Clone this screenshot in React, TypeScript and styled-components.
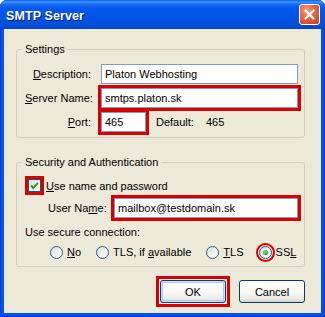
import React from "react";
import styled, { createGlobalStyle } from "styled-components";

const GlobalStyle = createGlobalStyle`
  body {
    margin: 0;
    background: #ffffff;
  }
`;

const Window = styled.div`
  width: 325px;
  height: 317px;
  box-sizing: border-box;
  display: flex;
  flex-direction: column;
  border-radius: 7px 7px 0 0;
  overflow: hidden;
  background: #0054e3;
  box-shadow: inset 1px 0 0 #0831d9, inset -1px 0 0 #0831d9, inset 0 -1px 0 #0831d9;
  font-family: "Liberation Sans", Arial, sans-serif;
  font-size: 11px;
  color: #000;
`;

const TitleBar = styled.div`
  height: 29px;
  flex: none;
  display: flex;
  align-items: center;
  justify-content: space-between;
  padding: 2px 5px 0 6px;
  box-sizing: border-box;
  background: linear-gradient(
    to bottom,
    #0a5fe6 0%,
    #3d95ff 7%,
    #1a6cf5 14%,
    #0058ee 30%,
    #0055e5 60%,
    #004fda 85%,
    #0046c6 100%
  );
`;

const Title = styled.span`
  color: #fff;
  font-weight: bold;
  font-size: 12.5px;
  text-shadow: 1px 1px 0 #0a1883;
  letter-spacing: 0.1px;
`;

const CloseButton = styled.div`
  width: 21px;
  height: 21px;
  margin-top: -2px;
  box-sizing: border-box;
  border: 1px solid #fff;
  border-radius: 3px;
  background: radial-gradient(circle at 35% 30%, #f2a07f 0%, #e46a43 40%, #c43c16 100%);
  display: flex;
  align-items: center;
  justify-content: center;
`;

const Body = styled.div`
  flex: 1;
  margin: 0 4px 4px;
  background: #ece9d8;
  padding: 13px 16px 0 12px;
  display: flex;
  flex-direction: column;
`;

const Group = styled.fieldset<{ $top?: number }>`
  margin: ${(p) => p.$top ?? 0}px 0 0;
  padding: 0;
  border: 1px solid #d0d0bf;
  border-radius: 3px;
  min-width: 0;
`;

const Legend = styled.legend`
  margin-left: 5px;
  padding: 0 3px;
  line-height: 14px;
`;

const FieldGrid = styled.div`
  display: grid;
  grid-template-columns: 66px 1fr;
  column-gap: 10px;
  row-gap: 4px;
  align-items: center;
  padding: 8px 6px 5px 8px;
`;

const Label = styled.label<{ $width?: number }>`
  text-align: ${(p) => (p.$width ? "left" : "right")};
  width: ${(p) => (p.$width ? `${p.$width}px` : "auto")};
  flex: none;
  white-space: nowrap;
`;

const TextBox = styled.input<{ $marked?: boolean; $width?: number }>`
  height: 20px;
  box-sizing: border-box;
  border: 1px solid #7f9db9;
  background: #fff;
  padding: 0 3px;
  margin: 0;
  font: inherit;
  color: #000;
  width: ${(p) => (p.$width ? `${p.$width}px` : "100%")};
  min-width: 0;
  outline: ${(p) => (p.$marked ? "3px solid #d60000" : "none")};
`;

const PortRow = styled.div`
  display: flex;
  align-items: center;
`;

const DefaultText = styled.span<{ $gap: number }>`
  margin-left: ${(p) => p.$gap}px;
`;

const SecurityContent = styled.div`
  padding: 8px 6px 6px 8px;
  display: flex;
  flex-direction: column;
`;

const CheckRow = styled.label`
  height: 17px;
  display: flex;
  align-items: center;
  gap: 5px;
  padding-left: 3px;
`;

const CheckBox = styled.span<{ $marked?: boolean }>`
  width: 13px;
  height: 13px;
  box-sizing: border-box;
  border: 1px solid #1c5180;
  background: linear-gradient(135deg, #dcdcd7 0%, #f6f6f3 70%, #ffffff 100%);
  display: flex;
  align-items: center;
  justify-content: center;
  outline: ${(p) => (p.$marked ? "3px solid #d60000" : "none")};
`;

const UserRow = styled.div`
  margin-top: 4px;
  display: flex;
  align-items: center;
  padding-left: 23px;
`;

const Caption = styled.div`
  margin-top: 8px;
  line-height: 13px;
`;

const RadioRow = styled.div`
  margin-top: 5px;
  height: 16px;
  display: flex;
  align-items: center;
  gap: 15px;
  padding-left: 25px;
`;

const RadioItem = styled.label`
  display: flex;
  align-items: center;
  gap: 4px;
  white-space: nowrap;
`;

const RadioDot = styled.span<{ $checked?: boolean; $marked?: boolean }>`
  width: 13px;
  height: 13px;
  box-sizing: border-box;
  border-radius: 50%;
  border: 1px solid #2f5a8a;
  background: linear-gradient(135deg, #dcdcd7 0%, #f4f4f0 65%, #ffffff 100%);
  display: flex;
  align-items: center;
  justify-content: center;
  outline: ${(p) => (p.$marked ? "2px solid #d60000" : "none")};
  outline-offset: 1px;

  &::after {
    content: "";
    display: ${(p) => (p.$checked ? "block" : "none")};
    width: 5px;
    height: 5px;
    border-radius: 50%;
    background: radial-gradient(circle at 40% 40%, #8de08d 0%, #21a121 70%);
  }
`;

const ButtonRow = styled.div`
  margin-top: 13px;
  display: flex;
  justify-content: flex-end;
  gap: 13px;
`;

const Button = styled.button<{ $default?: boolean; $marked?: boolean }>`
  position: relative;
  width: 66px;
  height: 23px;
  box-sizing: border-box;
  margin: 0;
  padding: 0;
  border: 1px solid #003c74;
  border-radius: 3px;
  font: inherit;
  color: #000;
  background: linear-gradient(to bottom, #ffffff 0%, #f7f7f4 55%, #ecebe6 85%, #d6d0c5 100%);
  box-shadow: ${(p) =>
    p.$default ? "inset 0 0 0 1px #cee7ff, inset 0 0 0 2px #a9c8f5" : "none"};

  &::after {
    content: "";
    display: ${(p) => (p.$marked ? "block" : "none")};
    position: absolute;
    inset: -5px;
    border: 3px solid #d60000;
  }
`;

function Check() {
  return (
    <svg width="9" height="9" viewBox="0 0 9 9">
      <polyline points="1,4.5 3.3,7 8,1.8" fill="none" stroke="#21a121" strokeWidth="2" />
    </svg>
  );
}

export default function App() {
  return (
    <>
      <GlobalStyle />
      <Window>
        <TitleBar>
          <Title>SMTP Server</Title>
          <CloseButton>
            <svg width="11" height="11" viewBox="0 0 11 11">
              <path d="M1.5 1.5 L9.5 9.5 M9.5 1.5 L1.5 9.5" stroke="#fff" strokeWidth="2.4" strokeLinecap="round" />
            </svg>
          </CloseButton>
        </TitleBar>
        <Body>
          <Group>
            <Legend>Settings</Legend>
            <FieldGrid>
              <Label>
                <u>D</u>escription:
              </Label>
              <TextBox defaultValue="Platon Webhosting" />
              <Label>
                <u>S</u>erver Name:
              </Label>
              <TextBox defaultValue="smtps.platon.sk" $marked />
              <Label>
                <u>P</u>ort:
              </Label>
              <PortRow>
                <TextBox defaultValue="465" $width={45} $marked />
                <DefaultText $gap={10}>Default:</DefaultText>
                <DefaultText $gap={12}>465</DefaultText>
              </PortRow>
            </FieldGrid>
          </Group>

          <Group $top={17}>
            <Legend>Security and Authentication</Legend>
            <SecurityContent>
              <CheckRow>
                <CheckBox $marked>
                  <Check />
                </CheckBox>
                <span>
                  <u>U</u>se name and password
                </span>
              </CheckRow>
              <UserRow>
                <Label $width={66}>
                  User Na<u>m</u>e:
                </Label>
                <TextBox defaultValue="mailbox@testdomain.sk" $marked />
              </UserRow>
              <Caption>Use secure connection:</Caption>
              <RadioRow>
                <RadioItem>
                  <RadioDot />
                  <span>
                    <u>N</u>o
                  </span>
                </RadioItem>
                <RadioItem>
                  <RadioDot />
                  <span>
                    TLS, if <u>a</u>vailable
                  </span>
                </RadioItem>
                <RadioItem>
                  <RadioDot />
                  <span>
                    <u>T</u>LS
                  </span>
                </RadioItem>
                <RadioItem>
                  <RadioDot $checked $marked />
                  <span>
                    SS<u>L</u>
                  </span>
                </RadioItem>
              </RadioRow>
            </SecurityContent>
          </Group>

          <ButtonRow>
            <Button $default $marked>
              OK
            </Button>
            <Button>Cancel</Button>
          </ButtonRow>
        </Body>
      </Window>
    </>
  );
}
